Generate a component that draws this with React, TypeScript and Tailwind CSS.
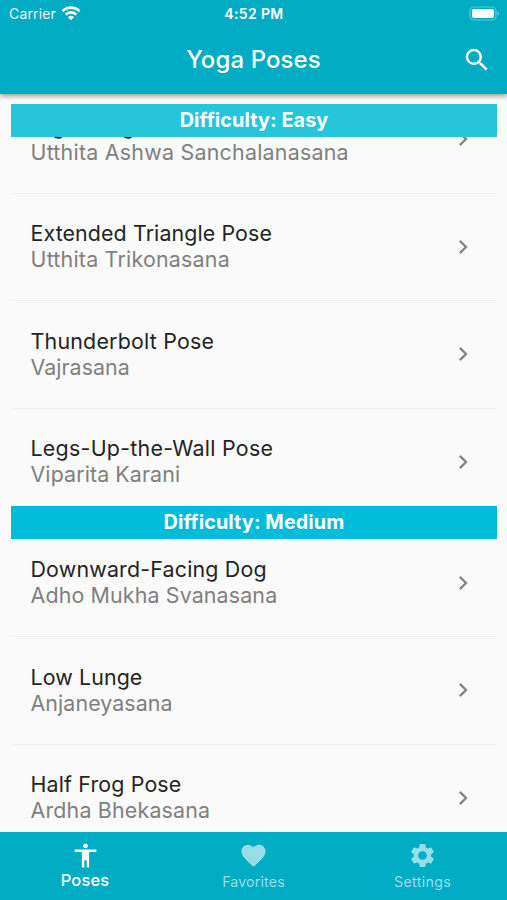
import { Fragment } from "react";
import {
  MdAccessibility,
  MdFavorite,
  MdKeyboardArrowRight,
  MdSearch,
  MdSettings,
} from "react-icons/md";

type Pose = { name: string; sanskrit: string; nameSpacing: string; sanskritSpacing: string };

const easy: Pose[] = [
  { name: "High Lunge", sanskrit: "Utthita Ashwa Sanchalanasana", nameSpacing: "tracking-[0.1px]", sanskritSpacing: "tracking-[0.24px]" },
  { name: "Extended Triangle Pose", sanskrit: "Utthita Trikonasana", nameSpacing: "tracking-[0.1px]", sanskritSpacing: "tracking-[0.22px]" },
  { name: "Thunderbolt Pose", sanskrit: "Vajrasana", nameSpacing: "tracking-[0.21px]", sanskritSpacing: "tracking-[0.05px]" },
  { name: "Legs-Up-the-Wall Pose", sanskrit: "Viparita Karani", nameSpacing: "tracking-[0.27px]", sanskritSpacing: "tracking-[0.1px]" },
];

const medium: Pose[] = [
  { name: "Downward-Facing Dog", sanskrit: "Adho Mukha Svanasana", nameSpacing: "tracking-[0.18px]", sanskritSpacing: "tracking-[0.14px]" },
  { name: "Low Lunge", sanskrit: "Anjaneyasana", nameSpacing: "tracking-[0.1px]", sanskritSpacing: "tracking-[0.08px]" },
  { name: "Half Frog Pose", sanskrit: "Ardha Bhekasana", nameSpacing: "tracking-[0.15px]", sanskritSpacing: "tracking-[0.18px]" },
];

function PoseList({ poses }: { poses: Pose[] }) {
  return (
    <>
      {poses.map((pose, i) => (
        <Fragment key={pose.name}>
          {i > 0 && (
            <div className="flex h-[21.5px] items-center">
              <div className="h-px w-full bg-[#f0f0f0]" />
            </div>
          )}
          <div className="flex h-[86px] items-center justify-between pr-5 pl-[19.5px]">
            <div className="pb-[1.5px] text-[21.4px] leading-[26px] whitespace-nowrap">
              <div className={`text-[#242424] ${pose.nameSpacing}`}>{pose.name}</div>
              <div className={`text-[#808080] ${pose.sanskritSpacing}`}>{pose.sanskrit}</div>
            </div>
            <MdKeyboardArrowRight className="size-7 text-[#858585]" />
          </div>
        </Fragment>
      ))}
    </>
  );
}

function WifiGlyph() {
  return (
    <svg viewBox="0 0 20 15" className="h-[15px] w-5" fill="none" stroke="white" strokeWidth="2.7">
      <path d="M1.5 5.2a12 12 0 0 1 17 0" />
      <path d="M4.6 8.6a7.6 7.6 0 0 1 10.8 0" />
      <path d="M10 14.2 7 11.3a4.3 4.3 0 0 1 6 0Z" fill="white" stroke="none" />
    </svg>
  );
}

export default function App() {
  return (
    <div className="flex h-[900px] w-[507px] flex-col overflow-hidden bg-[#fafafa] font-['Inter','Liberation_Sans',sans-serif]">
      <header className="relative z-20 h-[94px] shrink-0 bg-[#00acc4] text-white shadow-[0_2px_5px_rgba(0,0,0,0.4)]">
        <div className="grid h-[27px] grid-cols-3 items-center pr-[7px] pl-[9px] text-[14px]">
          <div className="flex items-center gap-[5px]">
            <span className="tracking-[0.15px] text-white/90">Carrier</span>
            <WifiGlyph />
          </div>
          <div className="pr-[1px] text-center text-[14px] font-semibold tracking-[0.35px]">4:52 PM</div>
          <svg viewBox="0 0 31 15" className="h-[15px] w-[31px] justify-self-end">
            <rect x="1" y="1" width="26" height="13" rx="4" fill="none" stroke="white" strokeOpacity="0.35" strokeWidth="1.2" />
            <rect x="3" y="3" width="22" height="9" rx="2" fill="white" />
            <path d="M28.6 5.5c2 .7 2 3.3 0 4z" fill="white" fillOpacity="0.45" />
          </svg>
        </div>
        <div className="grid h-[65px] grid-cols-[48px_1fr_48px] items-center pr-[6px] pl-[6px]">
          <span />
          <h1 className="text-center text-[24px] font-medium tracking-[0.1px]">Yoga Poses</h1>
          <MdSearch className="size-[30px] justify-self-center" />
        </div>
      </header>

      <main className="h-[738px] shrink-0 overflow-hidden pt-[10px] pr-[10px] pl-[11px]">
        <h2 className="relative z-10 h-[32.5px] bg-[#26c6da] text-center text-[19.8px] leading-[33px] font-bold tracking-[0.1px] text-white">
          Difficulty: Easy
        </h2>
        <div className="-mt-[40.25px]">
          <PoseList poses={easy} />
        </div>
        <h2 className="mt-[1.25px] mb-[0.75px] h-[33px] bg-[#00bcd8] text-center text-[19.8px] leading-[33px] font-bold tracking-[0.1px] text-white">
          Difficulty: Medium
        </h2>
        <PoseList poses={medium} />
      </main>

      <nav className="grid h-[68px] shrink-0 grid-cols-3 bg-[#00acc4] text-white">
        <div className="flex flex-col items-center pt-[9px] pl-[1px]">
          <MdAccessibility className="size-[29px]" />
          <span className="text-[16.5px] leading-5 font-medium tracking-[0.1px]">Poses</span>
        </div>
        <div className="flex flex-col items-center pt-[9px] text-[#97dde7]">
          <MdFavorite className="size-[29px]" />
          <span className="mt-[2px] text-[14.2px] leading-5 tracking-[0.15px]">Favorites</span>
        </div>
        <div className="flex flex-col items-center pt-[9px] text-[#97dde7]">
          <MdSettings className="size-[29px]" />
          <span className="mt-[2px] text-[14.2px] leading-5 tracking-[0.35px]">Settings</span>
        </div>
      </nav>
    </div>
  );
}
